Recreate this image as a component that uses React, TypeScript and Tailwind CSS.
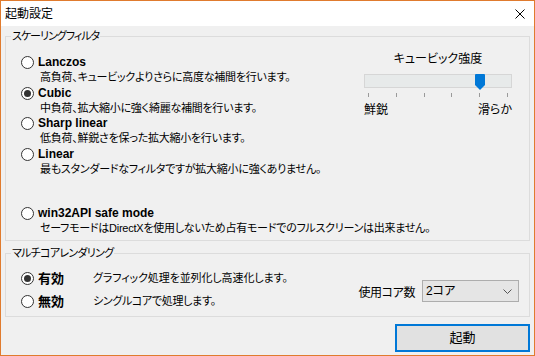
import React from "react";

const FILTERS = [
  { name: "Lanczos", desc: "高負荷、キュービックよりさらに高度な補間を行います。" },
  { name: "Cubic", desc: "中負荷、拡大縮小に強く綺麗な補間を行います。", checked: true },
  { name: "Sharp linear", desc: "低負荷、鮮鋭さを保った拡大縮小を行います。" },
  { name: "Linear", desc: "最もスタンダードなフィルタですが拡大縮小に強くありません。" },
];

const TICKS = [0, 1, 2, 3, 4, 5];

function Radio({ checked }: { checked?: boolean }) {
  return (
    <span className="flex h-[13px] w-[13px] shrink-0 items-center justify-center rounded-full border border-[#333333] bg-white">
      {checked && <span className="h-[7px] w-[7px] rounded-full bg-[#333333]" />}
    </span>
  );
}

function Option({ name, desc, checked }: { name: string; desc: string; checked?: boolean }) {
  return (
    <div className="flex flex-col">
      <div className="flex h-[15px] items-center gap-[4px]">
        <Radio checked={checked} />
        <span className="font-bold leading-[15px]">{name}</span>
      </div>
      <div className="h-[15px] whitespace-nowrap pl-[19px] text-[11px] leading-[15px] tracking-[-0.25px]">{desc}</div>
    </div>
  );
}

export default function App() {
  return (
    <div className="flex h-[356px] w-[535px] flex-col overflow-hidden border border-[#e07b2e] bg-[#f0f0f0] font-['Liberation_Sans','Noto_Sans_CJK_JP',sans-serif] text-[12px] text-black [font-feature-settings:'palt']">
      {/* title bar */}
      <div className="flex h-[25px] shrink-0 items-center justify-between bg-white pl-[4px] pr-[9px]">
        <span className="leading-[14px] [font-feature-settings:normal]">起動設定</span>
        <svg width="10" height="10" viewBox="0 0 10 10" className="text-black">
          <path d="M0.5 0.5 L9.5 9.5 M9.5 0.5 L0.5 9.5" stroke="currentColor" strokeWidth="1" fill="none" />
        </svg>
      </div>

      <div className="flex flex-1 flex-col px-[4px] pt-[3px]">
        {/* scaling filter */}
        <fieldset className="min-w-0 border border-[#dcdcdc] px-[5px] pb-[4px]">
          <legend className="px-px text-[11px] leading-[14px] tracking-[-1px]">スケーリングフィルタ</legend>
          <div className="flex pt-[8px]">
            <div className="flex min-w-0 flex-1 flex-col gap-[0.5px] pl-[10px] pt-[4px]">
              {FILTERS.map((f) => (
                <Option key={f.name} {...f} />
              ))}
              <div className="mt-[29px]">
                <Option name="win32API safe mode" desc="セーフモードはDirectXを使用しないため占有モードでのフルスクリーンは出来ません。" />
              </div>
            </div>

            {/* cubic strength slider */}
            <div className="mr-[12px] flex w-[148px] shrink-0 flex-col">
              <div className="pt-px text-center leading-[14px]">キュービック強度</div>
              <div className="relative mt-[8px] h-[14px] border border-[#d6d6d6] bg-[#e7eaea]">
                <svg width="10" height="16" viewBox="0 0 10 16" className="absolute left-[110px] top-[-1px]">
                  <path d="M0 1 Q0 0 1 0 H9 Q10 0 10 1 V11 L5 16 L0 11 Z" fill="#0078d7" />
                </svg>
              </div>
              <div className="mt-[5px] flex h-[4px] justify-between px-[4px]">
                {TICKS.map((t) => (
                  <span key={t} className="h-[4px] w-px bg-[#9a9a9a]" />
                ))}
              </div>
              <div className="mt-[6px] flex justify-between leading-[14px]">
                <span>鮮鋭</span>
                <span>滑らか</span>
              </div>
            </div>
          </div>
        </fieldset>

        {/* multicore rendering */}
        <fieldset className="mt-[5px] min-w-0 border border-[#dcdcdc] px-[5px] pb-[7px]">
          <legend className="px-px text-[11px] leading-[14px] tracking-[-0.7px]">マルチコアレンダリング</legend>
          <div className="flex items-start pt-[11px]">
            <div className="flex flex-1 flex-col gap-[8px] pl-[10px]">
              <div className="flex h-[15px] items-center">
                <Radio checked />
                <span className="ml-[4px] w-[55px] text-[13px] font-bold leading-[15px]">有効</span>
                <span className="text-[11px] leading-[15px] tracking-[-0.1px]">グラフィック処理を並列化し高速化します。</span>
              </div>
              <div className="flex h-[15px] items-center">
                <Radio />
                <span className="ml-[4px] w-[55px] text-[13px] font-bold leading-[15px]">無効</span>
                <span className="text-[11px] leading-[15px] tracking-[-0.3px]">シングルコアで処理します。</span>
              </div>
            </div>
            <div className="mr-[5px] mt-[9px] flex items-end gap-[7px]">
              <span className="mb-[2px] leading-[14px] tracking-[-0.4px]">使用コア数</span>
              <div className="flex h-[22px] w-[97px] items-center justify-between border border-[#adadad] bg-[#e5e5e5] pl-[3px] pr-[6px]">
                <span className="leading-[14px]">2コア</span>
                <svg width="9" height="5" viewBox="0 0 9 5">
                  <path d="M0.5 0.5 L4.5 4.5 L8.5 0.5" stroke="#555" strokeWidth="1" fill="none" />
                </svg>
              </div>
            </div>
          </div>
        </fieldset>

        <div className="mt-[7px] flex justify-end">
          <button
            type="button"
            className="flex h-[28px] w-[135px] items-center justify-center border-2 border-[#0078d7] bg-[#e1e1e1] text-[13px] leading-[14px]"
          >
            起動
          </button>
        </div>
      </div>
    </div>
  );
}
